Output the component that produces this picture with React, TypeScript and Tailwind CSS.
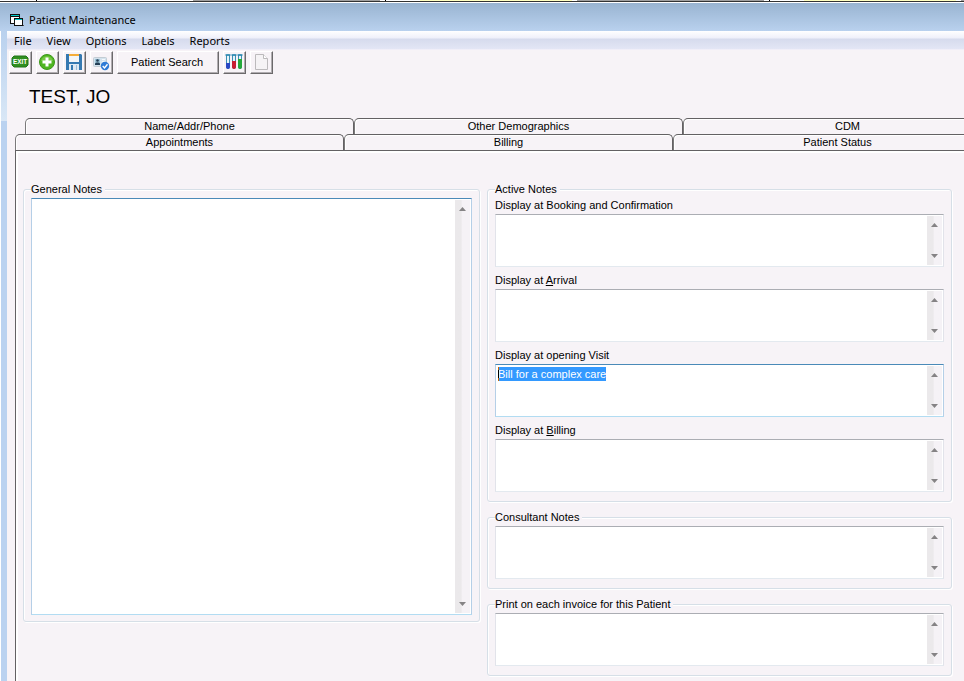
import React, { useEffect, useRef, useState } from 'react';

const menuItems = ['File', 'View', 'Options', 'Labels', 'Reports'];
const backTabs = ['Name/Addr/Phone', 'Other Demographics', 'CDM'];
const frontTabs = ['Appointments', 'Billing', 'Patient Status'];

const FormIcon = () => (
  <svg width="15" height="14" viewBox="0 0 15 14" shapeRendering="crispEdges" aria-hidden="true">
    <path d="M0 1h10v10H0z" fill="#111" />
    <path d="M1 4h8v6H1z" fill="#fff" />
    <path d="M1 2h8v1H1z" fill="#0cc" />
    <path d="M4 5h9v8H4z" fill="#111" />
    <path d="M5 7h7v5H5z" fill="#fff" />
    <path d="M5 6h7v1H5z" fill="#0cc" />
    <path d="M13 12h1v1h-1z" fill="#555" />
  </svg>
);

const ExitIcon = () => (
  <svg width="18" height="17" viewBox="0 0 18 17" aria-hidden="true">
    <path d="M3 2h12l2 2v7l-2 2H3l-2-2V4z" fill="#2f8f1f" stroke="#23751a" />
    <text x="9" y="10" textAnchor="middle" fontSize="6.4" fontWeight="bold" fontFamily="Liberation Sans, sans-serif" fill="#fff">EXIT</text>
  </svg>
);

const AddIcon = () => (
  <svg width="18" height="17" viewBox="0 0 18 17" aria-hidden="true">
    <circle cx="9" cy="8" r="7.500" fill="#4fb521" stroke="#3c971a" />
    <path d="M3 7a6.2 6.2 0 0 1 12 0z" fill="#74c944" />
    <path d="M9 3.500v9M4.500 8h9" stroke="#fff" strokeWidth="3" />
  </svg>
);

const SaveIcon = () => (
  <svg width="18" height="17" viewBox="0 0 18 17" aria-hidden="true">
    <path d="M1 0h15l1 1v15H1z" fill="#3579b1" />
    <path d="M4 0h10v2H4z" fill="#f5ae3a" />
    <path d="M4 2h10v6H4z" fill="#f4f6f8" />
    <path d="M4 10h10v6H4z" fill="#dfe9f2" />
    <path d="M6 11h2v5H6z" fill="#3579b1" />
    <path d="M11 11h1v5h-1z" fill="#9dbcd8" />
  </svg>
);

const CardIcon = () => (
  <svg width="18" height="17" viewBox="0 0 18 17" aria-hidden="true">
    <rect x="1.500" y="3.500" width="13" height="9" rx="1" fill="#d4e3ee" stroke="#c3ccd3" />
    <path d="M3 5h5v6H3z" fill="#9cc4d8" />
    <circle cx="5.500" cy="6.500" r="1.300" fill="#243e55" />
    <path d="M3 11V9.500l1.500-1h2l1.500 1V11z" fill="#243e55" />
    <path d="M10 5.500h3M10 7.500h3" stroke="#f4f8fb" />
    <circle cx="13" cy="12" r="4.200" fill="#2f7bd6" />
    <path d="M10.700 12l1.800 1.900 3-3.600" fill="none" stroke="#fff" strokeWidth="1.400" />
  </svg>
);

const tubes = [
  { x: 1, top: 9, color: '#2a49c4' },
  { x: 7, top: 7, color: '#c81e32' },
  { x: 13, top: 5, color: '#25a83a' },
];

const TubesIcon = () => (
  <svg width="18" height="17" viewBox="0 0 18 17" aria-hidden="true">
    {tubes.map((tube) => (
      <g key={tube.x}>
        <path d={`M${tube.x + 0.5} 1h3v12a1.500 1.500 0 0 1-3 0z`} fill="#e6f4fa" stroke="#3b8fb3" />
        <path d={`M${tube.x} ${tube.top}h4V13a2 2 0 0 1-4 0z`} fill={tube.color} />
        <path d={`M${tube.x - 0.5} 1h5`} stroke="#2a87b0" strokeWidth="1.500" />
      </g>
    ))}
  </svg>
);

const PageIcon = () => (
  <svg width="18" height="17" viewBox="0 0 18 17" aria-hidden="true">
    <path d="M3.500.5h8l4 4v11h-12z" fill="#f5f3f5" stroke="#bcbabc" />
    <path d="M11.500.5v4h4" fill="#fff" stroke="#bcbabc" />
  </svg>
);

interface ToolButtonProps {
  label: string;
  wide?: boolean;
  children: React.ReactNode;
}

const ToolButton: React.FC<ToolButtonProps> = ({ label, wide = false, children }) => (
  <button
    type="button"
    aria-label={label}
    className={`flex h-[23px] items-center justify-center border border-t-white border-l-white border-r-[#6b696b] border-b-[#6b696b] pr-[2px] shadow-[inset_-1px_-1px_0_#b0acb0] ${
      wide ? 'w-[102px]' : 'w-[23px]'
    }`}
  >
    {children}
  </button>
);

interface TabRowProps {
  tabs: string[];
  selected: string;
  onSelect: (tab: string) => void;
}

const TabRow: React.FC<TabRowProps> = ({ tabs, selected, onSelect }) => (
  <div className="flex overflow-hidden">
    {tabs.map((tab) => (
      <button
        key={tab}
        type="button"
        role="tab"
        aria-selected={selected === tab}
        onClick={() => onSelect(tab)}
        className="h-4 shrink-0 grow basis-[329px] rounded-t-[5px] border-t border-r border-l border-t-[#636163] border-r-[#636163] border-l-[#7b797b] pb-px leading-[14px] shadow-[inset_1px_1px_0_#fff]"
      >
        {tab}
      </button>
    ))}
  </div>
);

const ScrollBar = () => (
  <div className="m-px flex w-[15px] shrink-0 flex-col justify-between bg-linear-to-r from-[#ebe9eb] from-40% to-[#f5f2f6] to-50%">
    <button type="button" aria-label="Scroll up" className="flex h-[18px] items-center justify-center">
      <svg width="7" height="4" viewBox="0 0 7 4"><path d="M0 4L3.500 0 7 4z" fill="#858385" /></svg>
    </button>
    <button type="button" aria-label="Scroll down" className="flex h-[18px] items-center justify-center">
      <svg width="7" height="4" viewBox="0 0 7 4"><path d="M0 0h7L3.500 4z" fill="#858385" /></svg>
    </button>
  </div>
);

interface NoteBoxProps {
  id: string;
  label: string;
  text?: string;
  tall?: boolean;
  active?: boolean;
  selectText?: boolean;
}

const NoteBox: React.FC<NoteBoxProps> = ({ id, label, text = '', tall = false, active = false, selectText = false }) => {
  const [value, setValue] = useState(text);
  const box = useRef<HTMLTextAreaElement>(null);

  useEffect(() => {
    if (selectText) {
      box.current?.focus();
      box.current?.select();
    }
  }, [selectText]);

  const border = active
    ? 'border-t-[#4a8ab8] border-x-[#b5cfe7] border-b-[#b2dcf2]'
    : 'border-t-[#abadb3] border-x-[#e2e3ea] border-b-[#e3e9ef]';

  return (
    <div className={`relative flex border bg-white ${border} ${tall ? 'h-[417px]' : 'h-[53px]'}`}>
      <textarea
        id={id}
        ref={box}
        aria-label={label}
        value={value}
        onChange={(e) => setValue(e.target.value)}
        className="min-w-0 flex-1 resize-none overflow-hidden px-[2px] pt-[2px] leading-[14px] outline-none selection:bg-[#3399ff] selection:text-white"
      />
      {selectText && (
        <span className="pointer-events-none absolute top-[2px] left-[2px] h-[14px] w-px border-y-3 border-[#cc6600] bg-black" />
      )}
      <ScrollBar />
    </div>
  );
};

interface GroupProps {
  title: string;
  tall?: boolean;
  children: React.ReactNode;
}

const Group: React.FC<GroupProps> = ({ title, tall = false, children }) => (
  <fieldset
    className={`min-w-0 rounded-[3px] border border-[#d6dfe7] px-[7px] pt-[2px] shadow-[1px_1px_0_#fff,inset_1px_1px_0_#fff] ${
      tall ? 'pb-[6px]' : 'pb-[9px]'
    }`}
  >
    <legend className="bg-[#f7f3f7] pr-[3px] leading-[14px]">{title}</legend>
    {children}
  </fieldset>
);

const activeNotes = [
  { id: 'booking', before: 'Display at Booking and Confirmation', key: '', after: '' },
  { id: 'arrival', before: 'Display at ', key: 'A', after: 'rrival' },
  { id: 'visit', before: 'Display at opening Visit', key: '', after: '', text: 'Bill for a complex care' },
  { id: 'billing', before: 'Display at ', key: 'B', after: 'illing' },
];

// Edge of the window that lies behind this one
const BackWindow = () => (
  <div className="flex h-px overflow-hidden bg-white">
    <div className="mr-[156px] ml-9 w-px shrink-0 bg-black" />
    <div className="w-[187px] shrink-0 bg-[#a0a0a0]" />
    <div className="mr-[34px] ml-[5px] w-px shrink-0 bg-black" />
    <div className="w-[152px] shrink-0 bg-[#ffffc0]" />
    <div className="ml-[5px] w-[187px] shrink-0 bg-[#a0a0a0]" />
    <div className="mr-[34px] ml-[5px] w-px shrink-0 bg-black" />
    <div className="w-[152px] shrink-0 bg-[#ffffc0]" />
    <div className="ml-[5px] flex-1 bg-[#a0a0a0]" />
  </div>
);

const App: React.FC = () => {
  const [tab, setTab] = useState('');

  return (
    <div className="flex min-h-screen flex-col bg-[#f7f3f7] font-['Liberation_Sans',Arial,sans-serif] text-[11px] text-black">
      <BackWindow />
      <div className="h-[2px] border-t border-[#333] bg-white" />

      {/* Title bar */}
      <header className="flex h-7 items-center gap-1 bg-linear-to-b from-[#99b4d1] to-[#b9d1ee] pt-[6px] pl-[10px]">
        <FormIcon />
        <span className="font-['Noto_Sans','Open_Sans',sans-serif] leading-4">Patient Maintenance</span>
      </header>

      <div className="flex flex-1">
        <div className="w-[7px] shrink-0 border-l border-white bg-[linear-gradient(#b9d1ee,#d9e7f6_90px,#bad2f0_90px)]" />

        <main className="flex min-w-0 flex-1 flex-col">
          {/* Menu bar */}
          <nav className="flex h-[19px] items-center gap-[15px] border-b border-[#f0eef8] bg-[linear-gradient(#fff,#eff0fa_7px,#d6dbed_8px,#e3e6f5)] pt-[2px] pl-[7px] font-['Noto_Sans','Open_Sans',sans-serif] leading-4">
            {menuItems.map((item) => (
              <button key={item} type="button">{item}</button>
            ))}
          </nav>

          {/* Toolbar */}
          <div className="flex gap-1 pt-px pl-[2px]">
            <ToolButton label="Exit"><ExitIcon /></ToolButton>
            <ToolButton label="Add"><AddIcon /></ToolButton>
            <ToolButton label="Save"><SaveIcon /></ToolButton>
            <ToolButton label="Patient card"><CardIcon /></ToolButton>
            <ToolButton label="Patient Search" wide>Patient Search</ToolButton>
            <ToolButton label="Lab results"><TubesIcon /></ToolButton>
            <ToolButton label="New document"><PageIcon /></ToolButton>
          </div>

          <h1 className="pt-[11px] pb-[9px] pl-[22px] text-[19px] leading-6">TEST, JO</h1>

          {/* Tabs */}
          <div role="tablist">
            <div className="pl-[18px]">
              <TabRow tabs={backTabs} selected={tab} onSelect={setTab} />
            </div>
            <div className="pl-2">
              <TabRow tabs={frontTabs} selected={tab} onSelect={setTab} />
            </div>
          </div>

          {/* Notes */}
          <section className="ml-2 grid flex-1 grid-cols-[457fr_465fr] items-start gap-[7px] border-t border-l border-[#636163] pt-[31px] pr-3 pl-[7px] shadow-[inset_2px_2px_0_#fff]">
            <Group title="General Notes" tall>
              <NoteBox id="general" label="General Notes" tall active />
            </Group>

            <div className="flex min-w-0 flex-col gap-2">
              <Group title="Active Notes">
                <div className="flex flex-col gap-[6px]">
                  {activeNotes.map((note) => (
                    <div key={note.id}>
                      <label htmlFor={note.id} className="block h-4 leading-[14px]">
                        {note.before}
                        {note.key && <u>{note.key}</u>}
                        {note.after}
                      </label>
                      <NoteBox
                        id={note.id}
                        label={note.before + note.key + note.after}
                        text={note.text}
                        active={!!note.text}
                        selectText={!!note.text}
                      />
                    </div>
                  ))}
                </div>
              </Group>
              <Group title="Consultant Notes">
                <NoteBox id="consultant" label="Consultant Notes" />
              </Group>
              <Group title="Print on each invoice for this Patient">
                <NoteBox id="invoice" label="Print on each invoice for this Patient" />
              </Group>
            </div>
          </section>
        </main>
      </div>
    </div>
  );
};

export default App;
